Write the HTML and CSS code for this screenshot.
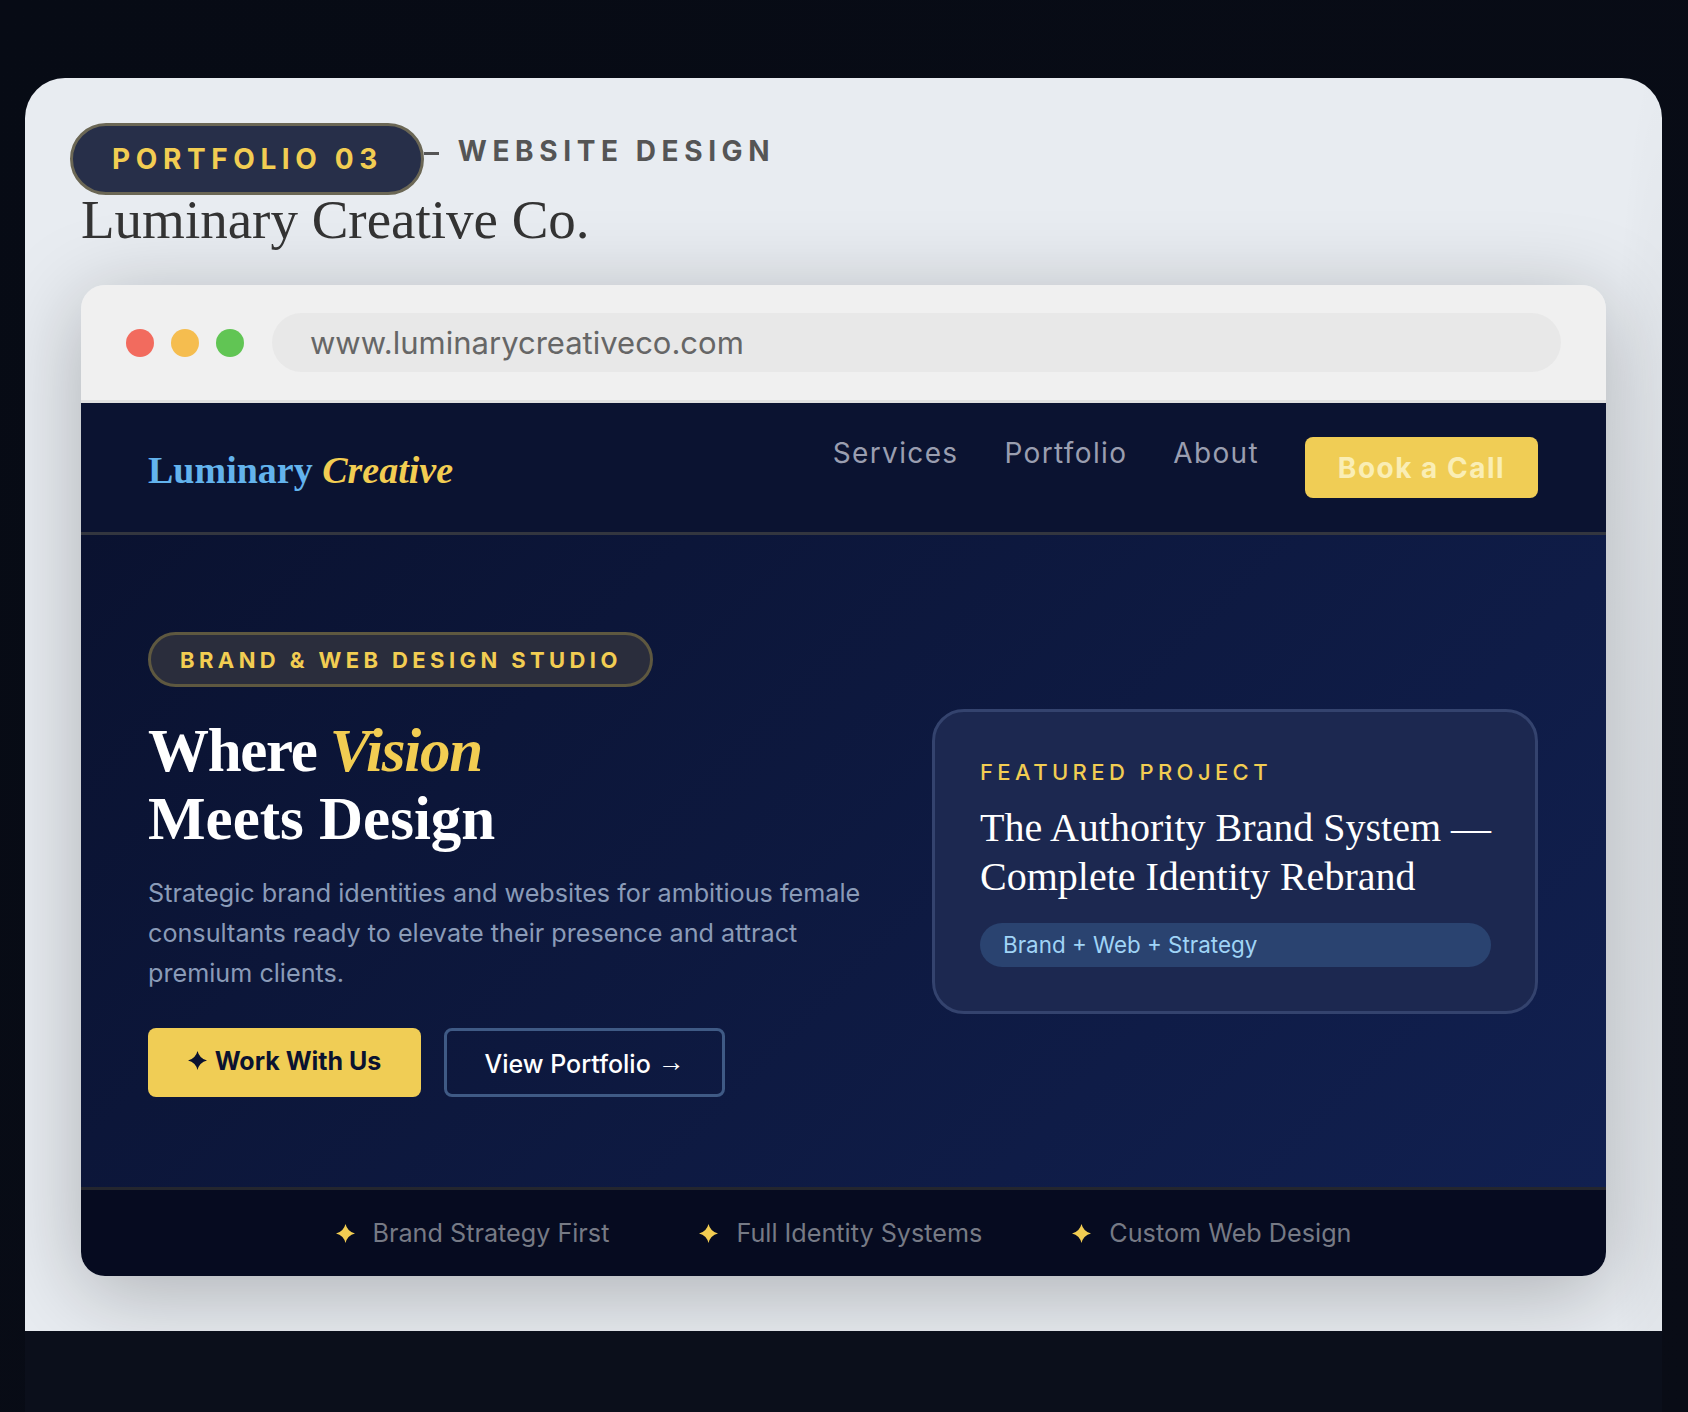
FILE: index.html
```html
<!DOCTYPE html>
<html lang="en">
<head>
    <meta charset="UTF-8">
    <title>Luminary Creative Co.</title>
    <link rel="stylesheet" href="styles.css">
</head>
<body>
    <div class="frame">
        <div class="card">
            <div class="label-row">
                <span class="pill">PORTFOLIO 03</span>
                <span class="dash"></span>
                <span class="kind">WEBSITE DESIGN</span>
            </div>
            <h2 class="client">Luminary Creative Co.</h2>

            <div class="browser">
                <div class="toolbar">
                    <span class="dot red"></span>
                    <span class="dot yellow"></span>
                    <span class="dot green"></span>
                    <div class="address">www.luminarycreativeco.com</div>
                </div>

                <nav class="nav">
                    <div class="logo">Luminary <em>Creative</em></div>
                    <div class="nav-right">
                        <a class="nav-link">Services</a>
                        <a class="nav-link">Portfolio</a>
                        <a class="nav-link">About</a>
                        <a class="nav-cta">Book a Call</a>
                    </div>
                </nav>

                <section class="hero">
                    <div class="hero-left">
                        <span class="badge">BRAND &amp; WEB DESIGN STUDIO</span>
                        <h1><span class="tight">Where</span> <em>Vision</em><br>Meets Design</h1>
                        <p class="lead">Strategic brand identities and websites for ambitious female consultants ready to elevate their presence and attract premium clients.</p>
                        <div class="actions">
                            <a class="btn btn-gold">
                                <svg class="spark" viewBox="0 0 20 20"><path d="M10 0Q12 8 20 10 12 12 10 20 8 12 0 10 8 8 10 0Z"/></svg>
                                Work With Us
                            </a>
                            <a class="btn btn-outline">View Portfolio <span class="arrow">→</span></a>
                        </div>
                    </div>
                    <div class="feature">
                        <div class="feature-label">FEATURED PROJECT</div>
                        <div class="feature-title">The Authority Brand System —<br>Complete Identity Rebrand</div>
                        <div class="feature-tag">Brand + Web + Strategy</div>
                    </div>
                </section>

                <footer class="strip">
                    <div class="strip-item">
                        <svg class="spark" viewBox="0 0 20 20"><path d="M10 0Q12 8 20 10 12 12 10 20 8 12 0 10 8 8 10 0Z"/></svg>
                        Brand Strategy First
                    </div>
                    <div class="strip-item">
                        <svg class="spark" viewBox="0 0 20 20"><path d="M10 0Q12 8 20 10 12 12 10 20 8 12 0 10 8 8 10 0Z"/></svg>
                        Full Identity Systems
                    </div>
                    <div class="strip-item">
                        <svg class="spark" viewBox="0 0 20 20"><path d="M10 0Q12 8 20 10 12 12 10 20 8 12 0 10 8 8 10 0Z"/></svg>
                        Custom Web Design
                    </div>
                </footer>
            </div>
        </div>
    </div>
</body>
</html>
```

FILE: styles.css
```css
* {
    box-sizing: border-box;
}
html, body {
    height: 100%;
}
body {
    margin: 0;
    padding: 78px 26px 0 25px;
    background: linear-gradient(135deg, #070b15 0%, #090c16 100%);
    font-family: 'Inter', sans-serif;
    overflow: hidden;
}
.frame {
    height: 100%;
    background: #0b0f1b;
    border-radius: 40px 40px 0 0;
}
.card {
    height: 1253px;
    padding: 45px 56px 0;
    background: radial-gradient(ellipse 60px 800px at 100% 60%, rgba(0, 0, 0, 0.07), transparent), #e8ecf1;
    border-radius: 40px 40px 0 0;
    overflow: hidden;
}

/* label row above the browser */
.label-row {
    display: flex;
    align-items: flex-start;
    margin-left: -11px;
}
.pill {
    height: 72px;
    padding: 0 38px 0 39px;
    display: flex;
    align-items: center;
    background: #272f49;
    border: 3px solid #6b6755;
    border-radius: 36px;
    color: #f2cd52;
    font-size: 28px;
    font-weight: 700;
    letter-spacing: 5.6px;
}
.dash {
    width: 15px;
    height: 3px;
    margin-top: 29px;
    background: #555;
}
.kind {
    margin: 11px 0 0 19px;
    color: #555;
    font-size: 28px;
    font-weight: 700;
    letter-spacing: 5.6px;
}
.client {
    margin: 0;
    height: 90px;
    color: #333;
    font-family: 'Liberation Serif', serif;
    font-size: 55px;
    font-weight: 400;
    line-height: 50px;
}

/* browser window */
.browser {
    border-radius: 24px;
    overflow: hidden;
    box-shadow: 0 16px 86px rgba(0, 0, 0, 0.26);
}
.toolbar {
    display: flex;
    align-items: center;
    gap: 17px;
    padding: 28px 45px;
    background: #f0f0f0;
    border-bottom: 3px solid #e0e0e0;
}
.dot {
    width: 28px;
    height: 28px;
    border-radius: 50%;
}
.red { background: #f26b5e; }
.yellow { background: #f5bd4f; }
.green { background: #61c554; }
.address {
    flex: 1;
    height: 59px;
    margin-left: 11px;
    padding: 0 38px;
    background: #e8e8e8;
    border-radius: 30px;
    color: #666;
    font-size: 31px;
    line-height: 59px;
}

/* site nav */
.nav {
    display: flex;
    justify-content: space-between;
    align-items: center;
    height: 132px;
    padding: 0 68px 0 67px;
    background: #0b1331;
    border-bottom: 3px solid #33363f;
}
.logo {
    padding-top: 5px;
    color: #63b3ed;
    font-family: 'Liberation Serif', serif;
    font-size: 38px;
    font-weight: 700;
}
.logo em {
    color: #f2cd52;
}
.nav-right {
    display: flex;
    align-items: flex-start;
    gap: 46px;
}
.nav-link {
    margin-top: -1px;
    color: #9a9eb0;
    font-size: 28px;
    letter-spacing: 1.35px;
}
.nav-cta {
    width: 233px;
    height: 61px;
    background: #f0cd55;
    border-radius: 8px;
    color: #faeeb5;
    font-size: 28px;
    font-weight: 700;
    letter-spacing: 1.5px;
    line-height: 62px;
    text-align: center;
}

/* hero */
.hero {
    display: grid;
    grid-template-columns: 1fr 606px;
    gap: 40px;
    align-items: center;
    height: 652px;
    padding: 0 68px 0 67px;
    background: linear-gradient(135deg, #0a1230 0%, #112050 100%);
}
.hero-left {
    margin-top: 7px;
}
.badge {
    display: inline-block;
    height: 55px;
    padding: 0 28px 0 29px;
    background: #2a2d3c;
    border: 3px solid #5e5840;
    border-radius: 28px;
    color: #f2cd52;
    font-size: 22px;
    font-weight: 700;
    letter-spacing: 4.4px;
    line-height: 50px;
}
h1 {
    margin: 30px 0 20px;
    color: #fff;
    font-family: 'Liberation Serif', serif;
    font-size: 61px;
    font-weight: 700;
    line-height: 68px;
}
.tight {
    letter-spacing: -1.3px;
}
h1 em {
    margin-left: -2px;
    color: #f2cd52;
    letter-spacing: -1.2px;
}
.lead {
    margin: 0 0 35px;
    color: #8a9bb8;
    font-size: 25.2px;
    line-height: 40.3px;
}
.actions {
    display: flex;
    gap: 23px;
}
.btn {
    display: block;
    height: 69px;
    border-radius: 8px;
    font-size: 25px;
    line-height: 62px;
    text-align: center;
}
.btn-gold {
    display: flex;
    justify-content: center;
    align-items: center;
    gap: 8px;
    width: 273px;
    padding-bottom: 4px;
    background: #f0cd55;
    color: #0a1230;
    font-weight: 700;
}
.btn-gold .spark {
    width: 19px;
    height: 19px;
    fill: #0a1230;
}
.btn-outline {
    width: 281px;
    border: 3px solid #3f5a85;
    color: #fff;
    font-weight: 500;
}
.arrow {
    font-family: 'Liberation Sans', sans-serif;
    font-size: 27px;
    vertical-align: 2px;
}

/* featured project */
.feature {
    height: 305px;
    padding: 47px 44px 46px 45px;
    background: #1c2850;
    border: 3px solid #34436e;
    border-radius: 32px;
}
.feature-label {
    color: #f2cd52;
    font-size: 22px;
    font-weight: 500;
    letter-spacing: 4.4px;
}
.feature-title {
    margin: 18px 0 21px;
    color: #fff;
    font-family: 'Liberation Serif', serif;
    font-size: 40px;
    line-height: 49.5px;
    white-space: nowrap;
}
.feature-tag {
    height: 44px;
    padding: 0 23px;
    background: #2a4370;
    border-radius: 22px;
    color: #a0d4f6;
    font-size: 22.4px;
    line-height: 44px;
}

/* bottom strip */
.strip {
    display: flex;
    justify-content: center;
    gap: 90px;
    height: 89px;
    background: #060b20;
    border-top: 3px solid #24262e;
}
.strip-item {
    display: flex;
    align-items: center;
    gap: 18px;
    color: #767a85;
    font-size: 25.2px;
}
.strip-item .spark {
    width: 19px;
    height: 19px;
    fill: #f2cd52;
}
```
